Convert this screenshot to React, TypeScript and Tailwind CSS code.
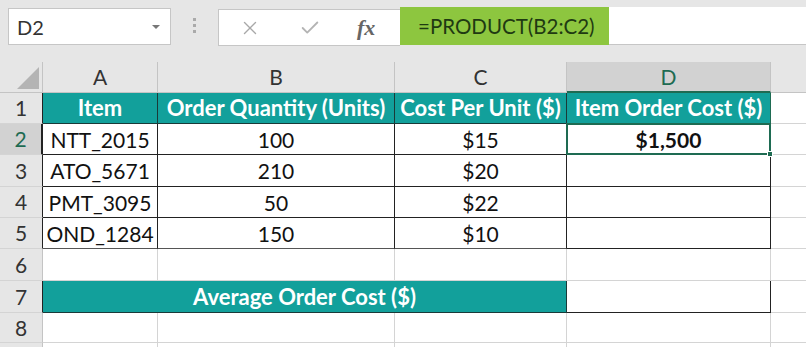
import { X, Check } from "lucide-react";

const font = { fontFamily: "Lato, 'Open Sans', sans-serif" };

const cols = ["A", "B", "C", "D"];

const data = [
    ["NTT_2015", "100", "$15"],
    ["ATO_5671", "210", "$20"],
    ["PMT_3095", "50", "$22"],
    ["OND_1284", "150", "$10"],
];

const rowHeights = ["h-[31px]", "h-[31px]", "h-[32px]", "h-[31px]", "h-[31px]", "h-[32px]", "h-[32px]", "h-[30px]", "h-[20px]"];

const head = "bg-[#12a09b] text-white font-bold text-[22px]";

function RowHead({ n, active, dark, label = true }: { n: number; active?: boolean; dark?: boolean; label?: boolean }) {
    return <div className={`flex items-center justify-center text-[21px] border-b border-b-[#d4d4d4] border-r ${dark ? "border-r-[#222]" : "border-r-[#c4c4c4]"} ${active ? "bg-[#d2d2d2] text-[#1e6b52] border-r-2 border-r-[#1e6b52]" : "bg-[#e6e6e6] text-[#333]"} ${rowHeights[n - 1]}`}>
        {label && n}
    </div>
}

function Cell({ children, className = "" }: { children?: React.ReactNode; className?: string }) {
    return <div className={`flex items-center justify-center border-b border-r text-[21px] leading-none text-[#111] whitespace-nowrap ${className}`}>
        {children}
    </div>
}

function App() {
    return <div className="w-[806px] h-[347px] overflow-hidden bg-white" style={font}>
        {/* formula bar */}
        <div className="h-[62px] bg-[#e6e6e6] flex items-start pt-[8px]">
            <div className="ml-[8px] w-[163px] h-[37px] bg-white border border-[#c6c6c6] flex items-center justify-between pl-[8px] pr-[10px]">
                <span className="text-[20px] text-[#333]">D2</span>
                <span className="w-0 h-0 border-l-[4px] border-r-[4px] border-t-[4px] border-l-transparent border-r-transparent border-t-[#777]" />
            </div>
            <div className="ml-[22px] mt-[10px] flex flex-col gap-[3px]">
                <span className="w-[3px] h-[3px] bg-[#aaa]" />
                <span className="w-[3px] h-[3px] bg-[#aaa]" />
                <span className="w-[3px] h-[3px] bg-[#aaa]" />
            </div>
            <div className="ml-[22px] w-[182px] h-[37px] mt-[1px] bg-white border border-[#c6c6c6] border-r-0 flex items-center">
                <X className="ml-[20px] text-[#a8a8a8]" size={22} strokeWidth={1.5} />
                <Check className="ml-[38px] text-[#b4b4b4]" size={22} strokeWidth={2} />
                <span className="ml-[36px] text-[22px] italic font-bold text-[#666]" style={{ fontFamily: "'Liberation Serif', serif" }}>fx</span>
            </div>
            <div className="flex-1 h-[38px] -mt-[1px] flex bg-white border-b border-[#c6c6c6]">
                <div className="w-[209px] h-[38px] bg-[#8dc63f] flex items-center pl-[18px] text-[20.5px] text-[#1f3a12]">
                    =PRODUCT(B2:C2)
                </div>
            </div>
        </div>

        {/* grid */}
        <div className="grid grid-cols-[43px_115px_237px_172px_204px_1fr]">
            <div className="h-[31px] bg-[#e6e6e6] border-r border-b border-[#c4c4c4] relative">
                <svg className="absolute right-[3px] bottom-[3px]" width="22" height="22"><polygon points="22,0 22,22 0,22" fill="#b4b4b4" /></svg>
            </div>
            {cols.map(c => <div key={c} className={`h-[31px] flex items-center justify-center text-[21px] border-r ${c === "D" ? "bg-[#d2d2d2] text-[#1e6b52] border-b-2 border-b-[#1e6b52] border-r-[#c4c4c4]" : "bg-[#e6e6e6] text-[#333] border-b border-[#c4c4c4]"}`}>
                {c}
            </div>)}
            <div className="h-[31px] bg-[#e6e6e6] border-b border-[#c4c4c4]" />

            {/* row 1 */}
            <RowHead n={1} dark />
            <Cell className={`${head} border-[#1a3a38]`}>Item</Cell>
            <Cell className={`${head} border-[#1a3a38]`}>Order Quantity (Units)</Cell>
            <Cell className={`${head} border-[#1a3a38]`}>Cost Per Unit ($)</Cell>
            <Cell className={`${head} border-[#1e6b52]`}>Item Order Cost ($)</Cell>
            <div className="border-b border-[#d4d4d4]" />

            {data.map((row, i) => {
                const n = i + 2;
                return [
                    <RowHead key={`h${n}`} n={n} active={n === 2} dark />,
                    ...row.map((v, j) => <Cell key={`${n}${j}`} className={`border-[#222] ${i === 3 ? "border-b-[#555]" : ""}`}>{v}</Cell>),
                    n === 2
                        ? <div key="sel" className="relative flex items-center justify-center text-[21px] leading-none font-bold text-[#111] border-2 border-[#1e6b52] -mt-[1px] -ml-[1px]">
                            $1,500
                            <span className="absolute -right-[4px] -bottom-[4px] w-[6px] h-[6px] bg-[#1e6b52] border border-white" />
                        </div>
                        : <Cell key={`d${n}`} className="border-[#222]" />,
                    <div key={`e${n}`} className="border-b border-[#d4d4d4]" />,
                ];
            })}

            {/* row 6 */}
            <RowHead n={6} />
            <div className="border-r border-b border-[#d4d4d4]" />
            <div className="border-r border-b border-[#d4d4d4]" />
            <div className="border-r border-b border-[#d4d4d4]" />
            <div className="border-r border-b border-[#d4d4d4]" />
            <div className="border-b border-[#d4d4d4]" />

            {/* row 7 */}
            <RowHead n={7} dark />
            <Cell className={`col-span-3 ${head} border-[#1a3a38]`}>Average Order Cost ($)</Cell>
            <Cell className="border-[#222]" />
            <div className="border-b border-[#d4d4d4]" />

            {/* row 8 */}
            <RowHead n={8} />
            <div className="border-r border-b border-[#d4d4d4]" />
            <div className="border-r border-b border-[#d4d4d4]" />
            <div className="border-r border-b border-[#d4d4d4]" />
            <div className="border-r border-b border-[#d4d4d4]" />
            <div className="border-b border-[#d4d4d4]" />

            {/* row 9, cut off by the window */}
            <RowHead n={9} label={false} />
            <div className="border-r border-[#d4d4d4]" />
            <div className="border-r border-[#d4d4d4]" />
            <div className="border-r border-[#d4d4d4]" />
            <div className="border-r border-[#d4d4d4]" />
            <div />
        </div>
    </div>
}

export default App;
